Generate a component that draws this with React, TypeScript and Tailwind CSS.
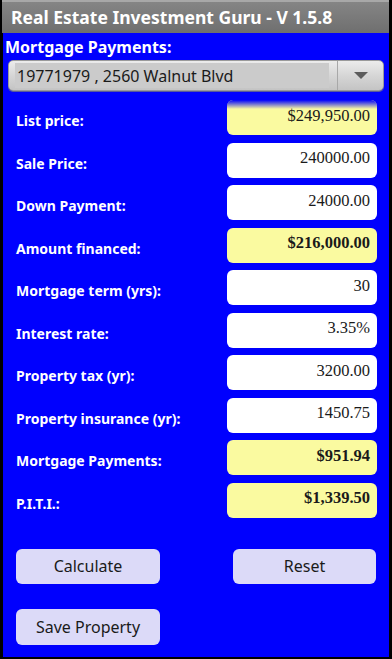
import React from "react";

type Row = { label: string; value: string; calc?: boolean; bold?: boolean };

const rows: Row[] = [
  { label: "List price:", value: "$249,950.00", calc: true },
  { label: "Sale Price:", value: "240000.00" },
  { label: "Down Payment:", value: "24000.00" },
  { label: "Amount financed:", value: "$216,000.00", calc: true, bold: true },
  { label: "Mortgage term (yrs):", value: "30" },
  { label: "Interest rate:", value: "3.35%" },
  { label: "Property tax (yr):", value: "3200.00" },
  { label: "Property insurance (yr):", value: "1450.75" },
  { label: "Mortgage Payments:", value: "$951.94", calc: true, bold: true },
  { label: "P.I.T.I.:", value: "$1,339.50", calc: true, bold: true },
];

const sans = "font-['Noto_Sans','Open_Sans',sans-serif]";

export default function App() {
  return (
    <div className={`w-[392px] h-[659px] bg-black flex flex-col overflow-hidden ${sans}`}>
      {/* title bar */}
      <div className="h-[33px] shrink-0 border-t-2 border-[#a8a8a8] bg-gradient-to-b from-[#858585] to-[#6f6f6f] flex items-center pl-[9px] ml-[2px] mr-[3px]">
        <span className="text-white font-bold text-[17.5px] leading-none">
          Real Estate Investment Guru - V 1.5.8
        </span>
      </div>
      {/* content */}
      <div className="flex-1 bg-[#0000fe] ml-[3px] mr-[3px] mb-[2px] flex flex-col">
        <div className="pl-[2px] pt-[3px] h-[27px] text-white font-bold text-[16px] leading-[22px]">
          Mortgage Payments:
        </div>
        <div className="ml-[5px] mr-[5px] h-[31px] rounded-[5px] bg-gradient-to-b from-[#ececec] via-[#d6d6d6] to-[#c4c4c4] border border-[#9a9a9a] flex items-stretch shadow-[0_1px_0_#5a5a9a]">
          <div className="flex-1 flex items-center pl-[6px] pr-[8px] py-[2px]">
            <div className="w-full h-full bg-[#cbcbcb] flex items-center pl-[2px]">
              <span className="text-[#1a1a1a] text-[16px] leading-none">19771979 , 2560 Walnut Blvd</span>
            </div>
          </div>
          <div className="w-[46px] border-l border-[#a8a8a8] flex items-center justify-center">
            <svg width="14" height="8" viewBox="0 0 14 8">
              <polygon points="0,0 14,0 7,7" fill="#5c5c5c" />
            </svg>
          </div>
        </div>
        <div className="relative mt-[9px] flex flex-col gap-[7.5px]">
          <div className="absolute left-[224px] top-0 w-[150px] h-[9px] rounded-t-[6px] bg-gradient-to-b from-[#0000fe] to-transparent z-10" />
          {rows.map((r) => (
            <div key={r.label} className="flex h-[35px]">
              <div className="flex-1 pl-[13px] pt-[10px] text-white font-bold text-[14px] leading-[22px]">
                {r.label}
              </div>
              <div
                className={`w-[150px] mr-[12px] rounded-[6px] flex items-center justify-end pr-[7px] pb-[3px] font-['Liberation_Serif',serif] text-[16.5px] leading-none text-[#1a1a1a] ${
                  r.calc ? "bg-[#fafaa0]" : "bg-white"
                } ${r.bold ? "font-bold" : ""}`}
              >
                {r.value}
              </div>
            </div>
          ))}
        </div>
        <div className="flex justify-between mt-[31px] pl-[13px] pr-[13px]">
          <button className="w-[144px] h-[35px] rounded-[6px] bg-[#dcdaf8] text-[#1a1a1a] text-[16px] leading-none">
            Calculate
          </button>
          <button className="w-[143px] h-[35px] rounded-[6px] bg-[#dcdaf8] text-[#1a1a1a] text-[16px] leading-none">
            Reset
          </button>
        </div>
        <div className="mt-[25px] pl-[13px]">
          <button className="w-[144px] h-[36px] rounded-[6px] bg-[#dcdaf8] text-[#1a1a1a] text-[16px] leading-none">
            Save Property
          </button>
        </div>
      </div>
    </div>
  );
}
